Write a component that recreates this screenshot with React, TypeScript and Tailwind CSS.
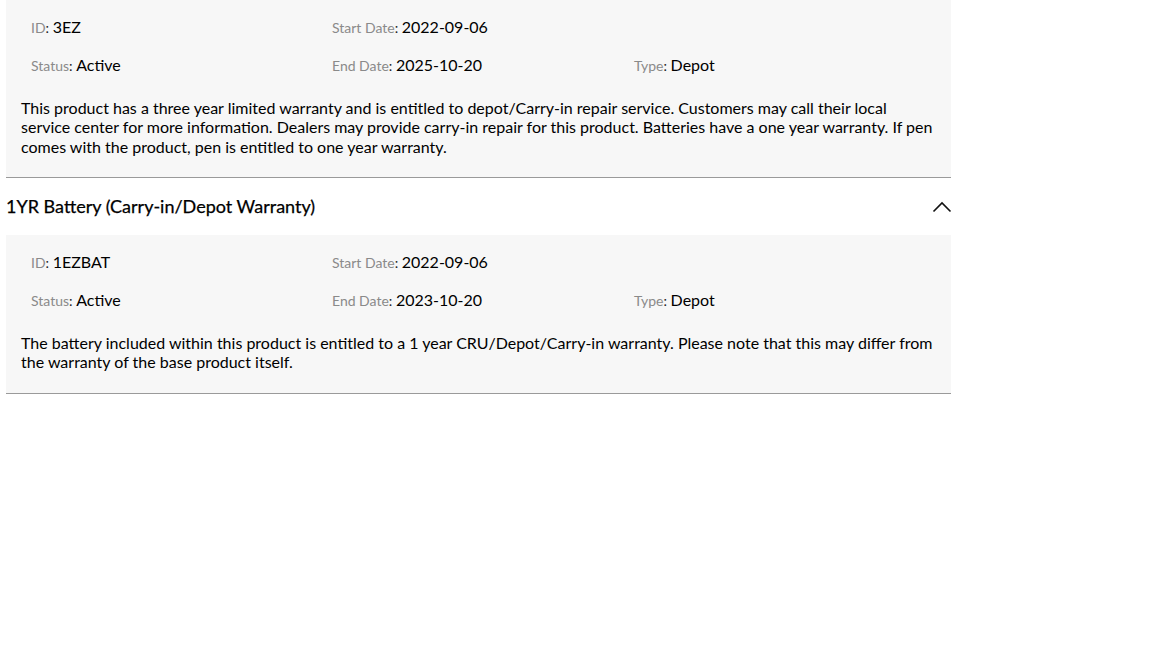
const warranties = [
  {
    title: "",
    id: "3EZ",
    start: "2022-09-06",
    end: "2025-10-20",
    status: "Active",
    type: "Depot",
    text: "This product has a three year limited warranty and is entitled to depot/Carry-in repair service. Customers may call their local service center for more information. Dealers may provide carry-in repair for this product. Batteries have a one year warranty. If pen comes with the product, pen is entitled to one year warranty.",
  },
  {
    title: "1YR Battery (Carry-in/Depot Warranty)",
    id: "1EZBAT",
    start: "2022-09-06",
    end: "2023-10-20",
    status: "Active",
    type: "Depot",
    text: "The battery included within this product is entitled to a 1 year CRU/Depot/Carry-in warranty. Please note that this may differ from the warranty of the base product itself.",
  },
];

const Field = ({ label, value }: { label: string; value: string }) => (
  <div className="leading-[22px] h-[22px]">
    <span className="text-[14px] text-[#8a8a8a]">{label}</span>
    <span className="text-[14px] text-[#222]">: </span>
    <span className="text-[16px] text-black">{value}</span>
  </div>
);

const Chevron = () => (
  <svg width="20" height="12" viewBox="0 0 20 12" fill="none">
    <polyline points="1.5,10.5 10,2 18.5,10.5" stroke="#111" strokeWidth="1.6" />
  </svg>
);

export default function App() {
  return (
    <div className="w-full min-h-screen bg-white" style={{ fontFamily: "Lato, 'Open Sans', sans-serif" }}>
      <div className="ml-[6px] w-[945px]">
        {warranties.map((w) => (
          <div key={w.id}>
            {w.title && (
              <div className="flex items-center justify-between h-[57px]">
                <span className="text-[18px] text-black [-webkit-text-stroke:0.25px_black]">{w.title}</span>
                <span className="mr-[-1px]">
                  <Chevron />
                </span>
              </div>
            )}
            <div className="bg-[#f7f7f7] border-b border-[#9a9a9a] pt-4 pb-[21px] px-[15px]">
              <div className="grid grid-cols-[301px_302px_1fr] gap-y-[15.5px] pl-[10px]">
                <Field label="ID" value={w.id} />
                <Field label="Start Date" value={w.start} />
                <div />
                <Field label="Status" value={w.status} />
                <Field label="End Date" value={w.end} />
                <Field label="Type" value={w.type} />
              </div>
              <p className="mt-[22px] text-[16px] leading-[19.5px] text-black">{w.text}</p>
            </div>
          </div>
        ))}
      </div>
    </div>
  );
}
